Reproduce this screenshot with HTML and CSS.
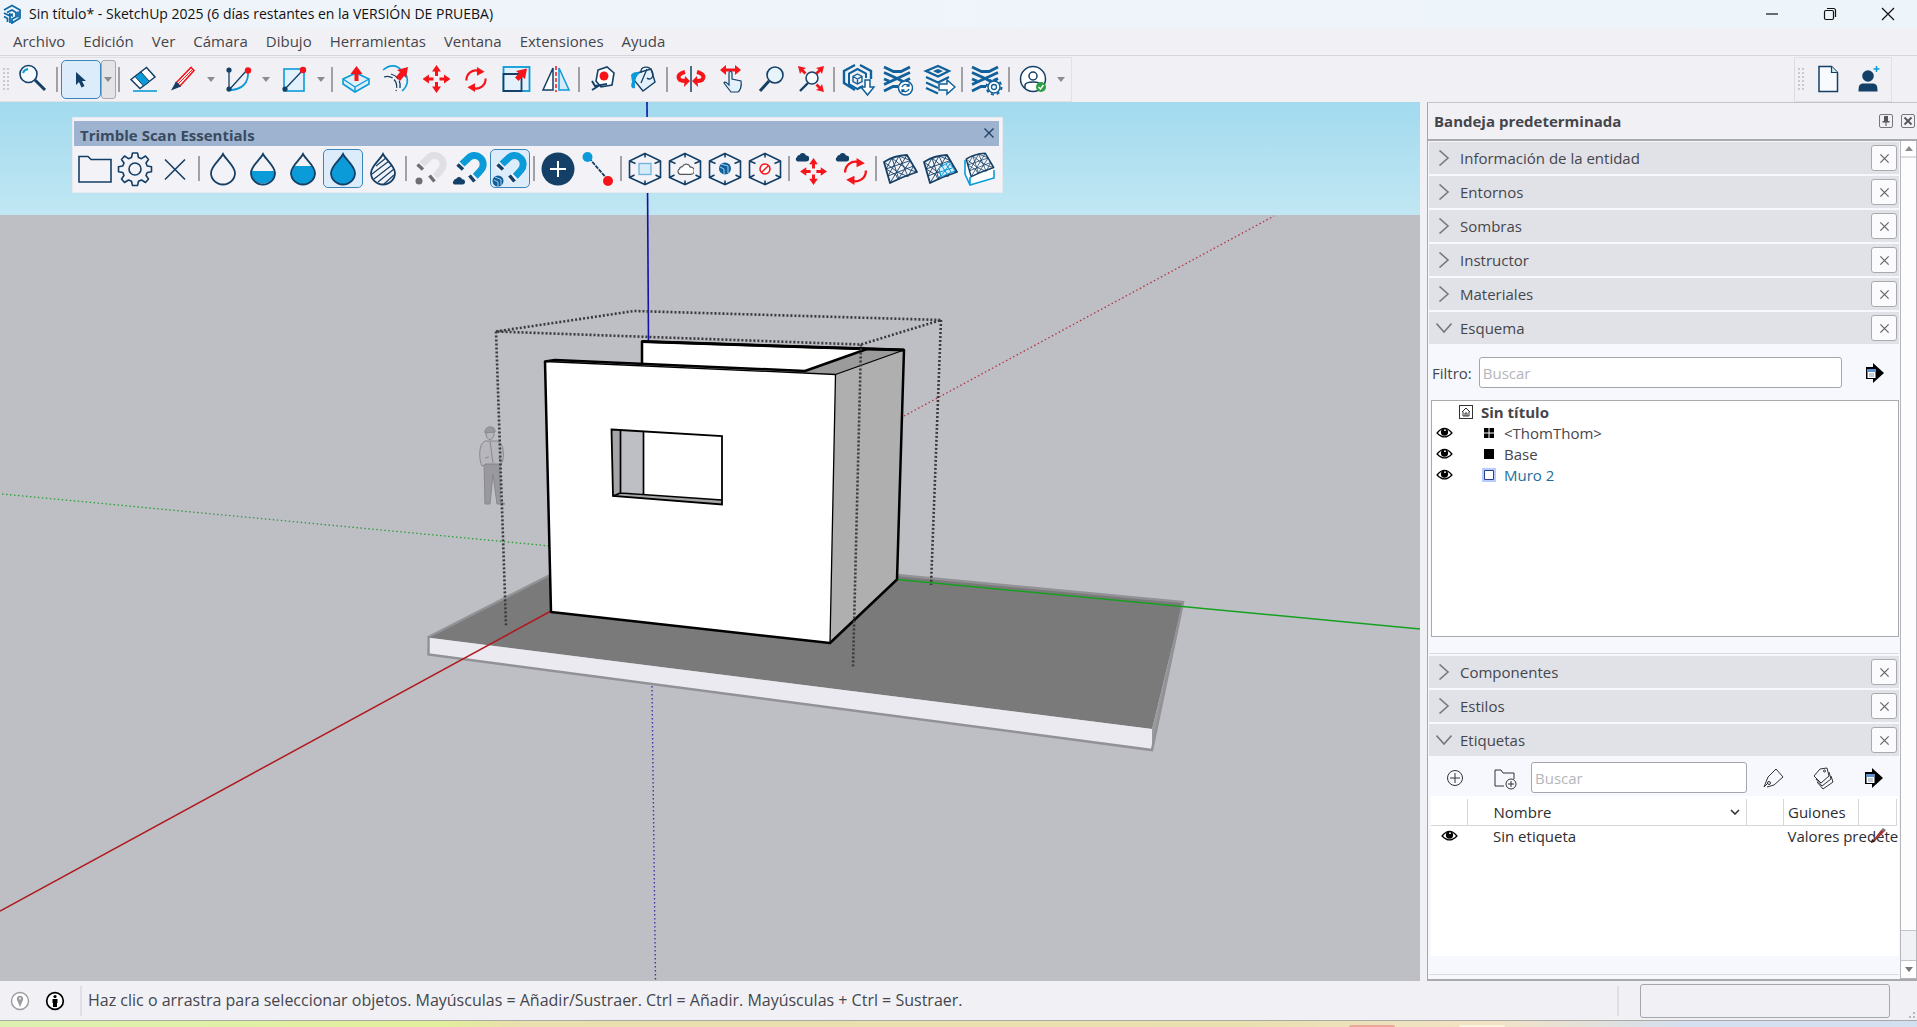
FILE: index.html
```html
<!DOCTYPE html>
<html lang="es">
<head>
    <meta charset="UTF-8">
    <meta name="viewport" content="width=device-width, initial-scale=1.0">
    <title>Sin título* - SketchUp 2025</title>
    <link rel="stylesheet" href="styles.css">
</head>
<body>
    <!-- shared shapes -->
    <svg class="defs" aria-hidden="true">
        <symbol id="i-x" viewBox="0 0 12 12"><path d="M1.5 1.5l9 9M10.5 1.5l-9 9" fill="none" stroke="currentColor" stroke-width="1.4"/></symbol>
        <symbol id="i-right" viewBox="0 0 16 16"><path d="M3.500 0.500l8.500 7.500-8.500 7.500" fill="none" stroke="currentColor" stroke-width="1.6"/></symbol>
        <symbol id="i-down" viewBox="0 0 16 16"><path d="M0.500 3.500l7.500 8.500 7.500-8.500" fill="none" stroke="currentColor" stroke-width="1.6"/></symbol>
        <symbol id="i-eye" viewBox="0 0 18 14"><path d="M1 7.500Q9-2.500 17 7.500Q9 16 1 7.500Z" fill="#fff" stroke="#000" stroke-width="1.500"/><circle cx="9" cy="6.500" r="3.900"/><circle cx="9.500" cy="4.500" r="1" fill="#fff"/></symbol>
        <symbol id="i-export" viewBox="0 0 18 20"><path d="M0 4h7V0l11 10L7 20v-4H0z"/><path d="M1.500 6h8v9h-8z" fill="#fff"/><path d="M1.500 6h8v3h-8z" fill="#5b93d6"/><path d="M3 11h5M3 13h5" stroke="#8a9bb0"/></symbol>
        <symbol id="i-drop" viewBox="0 0 36 36"><path d="M18 3C15 9 6 15 6 22a12 11.500 0 0 0 24 0C30 15 21 9 18 3z" stroke="#143f66" stroke-width="1.800"/></symbol>
        <symbol id="i-cube" viewBox="0 0 36 36"><path d="M18 2.500l15.500 7.500v16.500L18 33.500 2.500 26.500V10zM18 2.500v4M18 33.500v-4M2.500 10l6 2.500M33.500 10l-6 2.500M2.500 26.500l5-2.500M33.500 26.500l-5-2.500" fill="none" stroke="#143f66" stroke-width="1.600"/></symbol>
        <symbol id="i-cloud" viewBox="0 0 14 10"><path d="M2.500 9.500A2.500 2.500 0 0 1 2 5 2.500 2.500 0 0 1 4.500 3 3.500 3.500 0 0 1 11 3.500a3 3 0 0 1 .500 6z"/></symbol>
        <symbol id="i-move" viewBox="0 0 28 28"><path d="M14 0l4.500 6.500h-3V11h-3V6.500h-3zM14 28l4.500-6.500h-3V17h-3v4.500h-3zM0 14l6.500-4.500v3H11v3H6.500v3zM28 14l-6.500-4.500v3H17v3h4.500v3z" fill="#f5141a"/></symbol>
        <symbol id="i-rotate" viewBox="0 0 24 26"><path d="M2 14A10 10 0 0 1 15 4M22 12A10 10 0 0 1 9 22" fill="none" stroke="#f5141a" stroke-width="2.200"/><path d="M13 0l8 5-8 4zM11 26l-8-5 8-4z" fill="#f5141a"/></symbol>
        <symbol id="i-magnet" viewBox="0 0 36 36"><path d="M9 14L16 7.500A8.500 8.500 0 0 1 29 19L21 28" fill="none" stroke="currentColor" stroke-width="7"/></symbol>
        <symbol id="i-tips" viewBox="0 0 36 36"><path d="M5 13l6 6M17.500 24.500l6 6" fill="none" stroke="#f3f3f7" stroke-width="7"/><path d="M5.500 13.500l5.500 5M17.500 24.500l5 6" fill="none" stroke="currentColor" stroke-width="3.500"/></symbol>
        <symbol id="i-mesh" viewBox="0 0 36 36"><path d="M10 7l7 21.500M17 5l9 20.500M4 18l24.500-8.500M6 25l25.500-10M2 11l7.500 5.500 6.500 5 10 4M10 7l8 6.500 10 5.500 7 2M17 5l11.500 4.500M4 18l10 6 2 4.500M10 7L4 18M17 5L6 25M25 4L8 32M28.500 9.500L16 28.500M31.500 15L26 25.500" fill="none" stroke="currentColor" stroke-width=".9"/><path d="M2 11Q12 4.500 25 4L35 21Q20 26 8 32z" fill="none" stroke="currentColor" stroke-width="1.800" stroke-linejoin="round"/></symbol>
        <symbol id="i-layers" viewBox="0 0 36 36"><path d="M4 6l9.500 4.500h7.500L30 6M4 11.500l11 5 9 4.500M30 11.500L17 17.500 4 23.500M4 18l5 2M30 17.500l-5 2.500M4 30l9-4.500h5" fill="none" stroke="#10609b" stroke-width="2.800"/></symbol>
    </svg>

    <header class="titlebar">
        <svg class="logo" viewBox="0 0 20 20"><path d="M2 6l8-4.500L18 6v8l-8 5V15l4-2V8.500L10 6 5 8.500M2 9l6 3v7M2 12.500l3.500 2V18M10 9.500v2l-3-2M16 7.500v6" fill="none" stroke="#0e6aa8" stroke-width="1.800"/></svg>
        <h1>Sin título* - SketchUp 2025 (6 días restantes en la VERSIÓN DE PRUEBA)</h1>
        <div class="window-controls">
            <button aria-label="Minimizar"><svg viewBox="0 0 14 14"><path d="M1 7h12"/></svg></button>
            <button aria-label="Restaurar"><svg viewBox="0 0 14 14"><rect x="1.500" y="3.500" width="9" height="9" rx="1.500"/><path d="M4 1.500h6.500a2 2 0 0 1 2 2V10"/></svg></button>
            <button aria-label="Cerrar"><svg viewBox="0 0 14 14"><path d="M1 1l12 12M13 1L1 13"/></svg></button>
        </div>
    </header>

    <nav class="menubar">
        <button>Archivo</button>
        <button>Edición</button>
        <button>Ver</button>
        <button>Cámara</button>
        <button>Dibujo</button>
        <button>Herramientas</button>
        <button>Ventana</button>
        <button>Extensiones</button>
        <button>Ayuda</button>
    </nav>

    <div class="toolbars">
        <div class="toolbar main-tools">
            <span class="grip"></span>
            <button class="tool" aria-label="Buscar"><svg viewBox="0 0 36 36"><circle cx="13.500" cy="13" r="8.500" fill="#f4fafe" stroke="#143f66" stroke-width="1.600"/><path d="M8 12a6 6 0 0 1 5-4" fill="none" stroke="#0a9bd8" stroke-width="2"/><path d="M20 19l10 10" stroke="#143f66" stroke-width="3"/></svg></button>
            <span class="sep"></span>
            <button class="tool selected" aria-label="Seleccionar"><svg viewBox="0 0 36 36"><path d="M13 11v13l3-3 2.500 5.500 3-1.500-2.500-5h4z" fill="#143f66"/></svg></button>
            <button class="drop boxed" aria-label="Más"></button>
            <span class="sep"></span>
            <button class="tool" aria-label="Borrador"><svg viewBox="0 0 36 36"><path d="M21.500 6.500l8.500 9.500L15 27.500 6 18.500z" fill="#fff" stroke="#143f66" stroke-width="1.500"/><path d="M16 11l8.500 9.500-6 4.500L10 15.500z" fill="#0a9bd8" stroke="#143f66"/><path d="M8 30h24" stroke="#0a9bd8" stroke-width="1.600"/></svg></button>
            <button class="tool" aria-label="Línea"><svg viewBox="0 0 36 36"><path d="M11 22L26 6.500l3 3L15 25z" fill="#fff" stroke="#f5141a" stroke-width="1.600"/><path d="M13 23L28 8" stroke="#f5141a"/><path d="M11 20.500l5 5L6 29.500z" fill="#143f66"/></svg></button>
            <button class="drop" aria-label="Más"></button>
            <button class="tool" aria-label="Arco"><svg viewBox="0 0 36 36"><path d="M9 10v19L27 9" fill="none" stroke="#143f66" stroke-width="1.300"/><path d="M9 29C22 29 29 22 28 10" fill="none" stroke="#0a9bd8" stroke-width="1.800"/><circle cx="9" cy="9" r="2.600" fill="#143f66"/><circle cx="9" cy="28" r="2.600" fill="#143f66"/><circle cx="28" cy="9.500" r="3.200" fill="#f5141a"/></svg></button>
            <button class="drop" aria-label="Más"></button>
            <button class="tool" aria-label="Rectángulo"><svg viewBox="0 0 36 36"><rect x="9" y="8" width="20" height="22" fill="#e2f1fb" stroke="#0a9bd8" stroke-width="1.600"/><path d="M10 28L28 9" stroke="#143f66" stroke-width="1.300"/><circle cx="10" cy="28" r="2.600" fill="#143f66"/><circle cx="28" cy="9" r="3.200" fill="#f5141a"/></svg></button>
            <button class="drop" aria-label="Más"></button>
            <span class="sep"></span>
            <button class="tool" aria-label="Empujar/tirar"><svg viewBox="0 0 36 36"><path d="M5 18l13-6 13 6v5L17 31 5 23z" fill="#dff0fb" stroke="#0a9bd8" stroke-width="1.600"/><path d="M5 18l12 8 14-8M17 26v5" fill="none" stroke="#0a9bd8" stroke-width="1.400"/><path d="M18.500 5l6 8h-4v7h-4v-7h-4z" fill="#f5141a"/></svg></button>
            <button class="tool" aria-label="Sígueme"><svg viewBox="0 0 36 36"><path d="M5 9C12 3 19 4 23 9M27 12c4 6 3 13-3 18" fill="none" stroke="#0a9bd8" stroke-width="1.600"/><path d="M6 16c8-3 15 5 12 14M13 13c7 2 10 8 9 14" fill="none" stroke="#143f66" stroke-width="1.300" stroke-dasharray="9 2"/><path d="M30 6L19 9l3 2-4 5 4 4 4-5 2 2z" fill="#f5141a"/></svg></button>
            <button class="tool" aria-label="Mover"><svg viewBox="0 0 36 36"><use href="#i-move" x="4.500" y="4" width="28" height="28"/></svg></button>
            <button class="tool" aria-label="Rotar"><svg viewBox="0 0 36 36"><use href="#i-rotate" x="6.500" y="6" width="23" height="25"/></svg></button>
            <button class="tool" aria-label="Escala"><svg viewBox="0 0 36 36"><rect x="5.500" y="6" width="26" height="24" fill="#e2f1fb" stroke="#0a9bd8" stroke-width="1.800"/><path d="M5.500 13v17h18V13z" fill="#e2f1fb" stroke="#143f66" stroke-width="1.800"/><path d="M29 7.500L18 10l3 2.500-4 4 3.500 3.500 4-4L27 18z" fill="#f5141a"/></svg></button>
            <button class="tool" aria-label="Voltear"><svg viewBox="0 0 36 36"><path d="M15 7v22H5z" fill="#fff" stroke="#143f66" stroke-width="1.500"/><path d="M21 7v22h10z" fill="#d6ebf9" stroke="#0a9bd8" stroke-width="1.500"/><path d="M18 5v26" stroke="#f5141a" stroke-width="1.500" stroke-dasharray="4 2"/></svg></button>
            <span class="sep"></span>
            <button class="tool" aria-label="Medir"><svg viewBox="0 0 36 36"><path d="M13 9l9-3 7 6-2 12-11 2-5-6z" fill="#fff" stroke="#143f66" stroke-width="1.600"/><circle cx="19" cy="15" r="4.500" fill="#f5141a"/><path d="M7 20l3 5 12-2M7 29l8-5" fill="none" stroke="#143f66" stroke-width="2"/></svg></button>
            <button class="tool" aria-label="Pintar"><svg viewBox="0 0 36 36"><path d="M12 12l14-4 4 13-12 9-9-11z" fill="#e2f1fb" stroke="#143f66" stroke-width="1.400"/><path d="M16 12c-1-7 8-8 11-2s-2 10-5 7M22 8l-6 14" fill="none" stroke="#143f66" stroke-width="1.300"/><path d="M6 14c3-4 8-3 9-2-5 4-5 8-5 15-3 1-5-1-3-6z" fill="#0a9bd8"/></svg></button>
            <span class="sep"></span>
            <button class="tool" aria-label="Orbitar"><svg viewBox="0 0 36 36"><path d="M12 11c-8 2-7 6-5 8 2 1 4 1 7 1M24 11c8 2 7 6 5 8-2 1-3 1-5 1" fill="none" stroke="#f5141a" stroke-width="4"/><path d="M12 15l5 5-6 6zM24 15l-5 5 6 6z" fill="#f5141a"/><path d="M18 5v26" stroke="#143f66" stroke-width="1.500"/></svg></button>
            <button class="tool" aria-label="Desplazar"><svg viewBox="0 0 36 36"><path d="M7 9l6-5v3.500h9V4l6 5-6 5v-3.500h-9V14z" fill="#f5141a"/><path d="M16 24V12c0-2 3-2 3 0v6l9 2c1 5-1 10-3 11h-7l-7-9c1-2 3 0 5 2z" fill="#e2f1fb" stroke="#143f66" stroke-width="1.200"/></svg></button>
            <button class="tool" aria-label="Zoom"><svg viewBox="0 0 36 36"><circle cx="22" cy="14" r="8" fill="#e8f4fc" stroke="#143f66" stroke-width="1.600"/><path d="M16 20L7 30" stroke="#143f66" stroke-width="3"/></svg></button>
            <button class="tool" aria-label="Ver todo"><svg viewBox="0 0 36 36"><circle cx="19" cy="17" r="6" fill="#f4fafe" stroke="#143f66" stroke-width="1.500"/><path d="M15 22l-8 8" stroke="#143f66" stroke-width="2.400"/><path d="M5 5l8 2-2.500 1.500 3 3-2 2-3-3L7 13zM31 5l-8 2 2.500 1.500-3 3 2 2 3-3L29 13zM31 31l-8-2 2.500-1.500-3-3 2-2 3 3L29 23z" fill="#f5141a"/></svg></button>
            <span class="sep"></span>
            <button class="tool" aria-label="3D Warehouse"><svg viewBox="0 0 36 36"><path d="M15 4L4 10v12l11 7M20 4l11 6v8" fill="none" stroke="#10609b" stroke-width="2.400"/><path d="M23 25l-5.500 3L9 23V12.500L17.500 8 26 12.500V17" fill="none" stroke="#10609b" stroke-width="2"/><path d="M17.500 13l4.500 2.500v5L17.500 23 13 20.500v-5zM13 15.500l4.500 2.500 4.500-2.500M17.500 18v5" fill="none" stroke="#10609b" stroke-width="1.400"/><path d="M25 19h5v7h4l-6.500 8L21 26h4z" fill="#fff" stroke="#10609b" stroke-width="1.500"/></svg></button>
            <button class="tool" aria-label="Extension Warehouse"><svg viewBox="0 0 36 36"><use href="#i-layers"/><circle cx="25.500" cy="27" r="7" fill="#fff" stroke="#10609b" stroke-width="1.500"/><path d="M22 26a4 4 0 0 1 7-1M29 28a4 4 0 0 1-7 1M29 22.500V25h-2.500M22 31.500V29h2.500" fill="none" stroke="#10609b" stroke-width="1.400"/></svg></button>
            <button class="tool" aria-label="LayOut"><svg viewBox="0 0 36 36"><path d="M6 10l12-5 11 5-11 5.500zM6 16l12 5.500 11-5.500M6 21.500l12 5.500M6 27l12 5.500" fill="none" stroke="#10609b" stroke-width="2.200"/><path d="M13 10l5-2 5 2-5 2.500z" fill="#10609b"/><path d="M19 23h8v-4l8 7-8 7v-4h-8z" fill="#fff" stroke="#10609b" stroke-width="1.500"/></svg></button>
            <span class="sep"></span>
            <button class="tool" aria-label="Administrador de extensiones"><svg viewBox="0 0 36 36"><use href="#i-layers"/><circle cx="26" cy="26" r="6" fill="#fff" stroke="#10609b" stroke-width="1.500"/><circle cx="26" cy="26" r="7.500" fill="none" stroke="#10609b" stroke-width="2" stroke-dasharray="3 2.900"/><circle cx="26" cy="26" r="2.500" fill="none" stroke="#10609b" stroke-width="1.300"/></svg></button>
            <span class="sep"></span>
            <button class="tool" aria-label="Cuenta"><svg viewBox="0 0 36 36"><circle cx="18" cy="18" r="12.500" fill="#fff" stroke="#143f66" stroke-width="1.500"/><circle cx="18" cy="15" r="4" fill="none" stroke="#143f66" stroke-width="1.500"/><path d="M10 27v-3c1-4 15-4 16 0v3" fill="none" stroke="#143f66" stroke-width="1.500"/><circle cx="26" cy="26" r="5" fill="#2f9e44"/><path d="M23.500 26l2 2 3-4" fill="none" stroke="#fff" stroke-width="1.400"/></svg></button>
            <button class="drop" aria-label="Más"></button>
        </div>
        <div class="toolbar side-tools">
            <span class="grip"></span>
            <button class="tool" aria-label="Nuevo"><svg viewBox="0 0 36 36"><path d="M9 5.500h12.500l6 6v19H9z" fill="#f7fbff" stroke="#143f66" stroke-width="1.500"/><path d="M21.500 5.500v6h6" fill="#cfe6f6" stroke="#143f66" stroke-width="1.200"/></svg></button>
            <button class="tool" aria-label="Añadir usuario"><svg viewBox="0 0 36 36"><circle cx="18" cy="15" r="5.800" fill="#143f66"/><path d="M8.500 30.500c0-6 1-8 5-8h9c4 0 5 2 5 8z" fill="#143f66"/><path d="M26.500 5v6M23.500 8h6" stroke="#0a9bd8" stroke-width="1.500"/></svg></button>
        </div>
    </div>

    <main class="workspace">
        <div class="viewport">
            <svg class="scene" viewBox="0 102 1420 879" preserveAspectRatio="xMidYMid slice" role="img" aria-label="Modelo">
                <defs>
                    <linearGradient id="sky" x1="0" y1="0" x2="0" y2="1"><stop offset="0" stop-color="#a2daee"/><stop offset="1" stop-color="#c1e7f3"/></linearGradient>
                </defs>
                <rect x="-500" y="102" width="2500" height="114" fill="url(#sky)"/>
                <rect x="-500" y="215" width="2500" height="1000" fill="#bebfc5"/>
                <!-- axes behind the model -->
                <path d="M647 102L648.500 341" stroke="#1313a8" stroke-width="1.600"/>
                <path d="M652 686L655.500 981" stroke="#3a34a8" stroke-width="1.400" stroke-dasharray="1.500 2.500"/>
                <path d="M904 416L1274 216" stroke="#b23340" stroke-width="1.300" stroke-dasharray="1.500 2.500"/>
                <path d="M2 494L550 546" stroke="#2c9c3a" stroke-width="1.300" stroke-dasharray="1.500 2.500"/>
                <!-- scale figure -->
                <g fill="#b6b6bc" stroke="#88888e" stroke-width="1">
                    <path d="M484 464l1 40h5l3-30 4 30h8l-5-3v-37z" fill="#98989e"/>
                    <path d="M485 441c-7 3-6 20-3 25l3-1v-1h16l2-4c1-10 0-17-6-19z"/>
                    <path d="M490 441l3 22M485 458l4-1M498 458l3 1" fill="none"/>
                    <ellipse cx="490" cy="434" rx="4" ry="5.500"/>
                    <path d="M485 433c-1-8 11-8 10-1z" fill="#98989e"/>
                </g>
                <!-- slab -->
                <path d="M427 637.500L551 574l346 1 286 27-31 127z" fill="#7a7a7b"/>
                <path d="M427 637.500L1152 729v21L428 654z" fill="#ebeaf1"/>
                <path d="M1183 602L1152 729v21z" fill="#99999e"/>
                <path d="M427.500 637.500L551 574.500M897 575l286 27-31 148L428.500 654.500v-17" fill="none" stroke="#919196" stroke-width="2.500"/>
                <path d="M897 579.500L1420 629" stroke="#16a01f" stroke-width="1.600"/>
                <path d="M551 611L0 911" stroke="#b01a1f" stroke-width="1.500"/>
                <!-- walls -->
                <path d="M642 341.500L867 350 805 371.500 642 364z" fill="#fff"/>
                <path d="M545 361.500l10-1.500 250 11L867 349l37 1-68.500 24.500z" fill="#9b9b9c"/>
                <path d="M835.500 374.500L904 350l-7 229.500-67 63.500z" fill="#afafb0"/>
                <path d="M545 361.500l290.500 13L830 643 551 612z" fill="#fff"/>
                <path d="M835.500 374.500L830 643M835.500 374.500L904 350M835.500 374.500l-290.500-13" fill="none" stroke="#000" stroke-width="1.300"/>
                <path d="M642 364v-22.500L904 350l-7 229.500-67 63.500-279-31-6-250.500 10-1.500 250 11L867 349" fill="none" stroke="#000" stroke-width="2.500" stroke-linejoin="round"/>
                <path d="M642 341.500L904 350" stroke="#000" stroke-width="3"/>
                <!-- window opening -->
                <path d="M611.500 429.500L722 436v68.500L613 496z" fill="#a5a5a7"/>
                <path d="M620.500 430l101.500 6v64l-101.500-7z" fill="#fff"/>
                <path d="M620.500 430l23 1.500v62.500l-23-1.500z" fill="#bebfc5"/>
                <path d="M620.500 430v63M643.500 431.500v62.500M620.500 493l101.500 7M620.500 493l-7.500 3" fill="none" stroke="#000" stroke-width="1.700"/>
                <path d="M611.500 429.500L722 436v68.500L613 496z" fill="none" stroke="#000" stroke-width="1.800"/>
                <!-- bounding box -->
                <path d="M496 331.500L634 311l307 9-80 24.500zM496 331.500L506 626M861 344.500L853 667M941 320L931 585" fill="none" stroke="#3b3b3e" stroke-width="2.600" stroke-dasharray="2 2"/>
            </svg>

            <div class="floatbar">
                <div class="floatbar-title">
                    <h2>Trimble Scan Essentials</h2>
                    <button aria-label="Cerrar"><svg viewBox="0 0 12 12"><use href="#i-x"/></svg></button>
                </div>
                <div class="floatbar-tools">
                    <button class="tool" aria-label="Abrir"><svg viewBox="0 0 36 36"><path d="M2 31V5.500h9l3 3h20V31z" fill="none" stroke="#143f66" stroke-width="1.600"/></svg></button>
                    <button class="tool" aria-label="Configuración"><svg viewBox="0 0 36 36"><path d="M15.500 2h5l1 4.500 3 1.200L28.500 5l3 3.500-2.500 3.500 1.200 3 4.300.800v5l-4.300.700-1.200 3 2.500 3.500-3 3.500-4-2.500-3 1.200-1 4.300h-5l-1-4.300-3-1.200-4 2.500-3-3.500L7 24.500l-1.200-3L1.500 20.800v-5l4.300-.800L7 12 4.500 8.500l3-3.500 4 2.700 3-1.200z" fill="none" stroke="#143f66" stroke-width="1.600" stroke-linejoin="round"/><circle cx="18" cy="18" r="6" fill="none" stroke="#143f66" stroke-width="1.600"/></svg></button>
                    <button class="tool" aria-label="Quitar"><svg viewBox="0 0 36 36"><path d="M8 8.500l20 20M28 8.500l-20 20" stroke="#143f66" stroke-width="1.600"/></svg></button>
                    <span class="sep"></span>
                    <button class="tool" aria-label="Densidad 0"><svg viewBox="0 0 36 36"><use href="#i-drop" fill="none"/></svg></button>
                    <button class="tool" aria-label="Densidad 1"><svg viewBox="0 0 36 36"><path d="M6.500 20h23c2 16-25 17-23 0z" fill="#0a9bd8"/><use href="#i-drop" fill="none"/></svg></button>
                    <button class="tool" aria-label="Densidad 2"><svg viewBox="0 0 36 36"><path d="M9.500 15h17c7 10 1 18-8.500 18S2.500 25 9.500 15z" fill="#0a9bd8"/><use href="#i-drop" fill="none"/></svg></button>
                    <button class="tool selected" aria-label="Densidad 3"><svg viewBox="0 0 36 36"><use href="#i-drop" fill="#0a9bd8"/></svg></button>
                    <button class="tool" aria-label="Densidad auto"><svg viewBox="0 0 36 36"><use href="#i-drop" fill="none"/><path d="M11 15l10-8M7 23L24 10M9 28L27 14M13 31l16-13M19 33l10-9" stroke="#143f66" stroke-width="1.200"/></svg></button>
                    <span class="sep"></span>
                    <button class="tool" aria-label="Imán apagado"><svg viewBox="0 0 36 36"><use href="#i-magnet" color="#dfdfe4"/><use href="#i-tips" color="#6f6f73"/><circle cx="7" cy="30" r="3.500" fill="#6f6f73"/></svg></button>
                    <button class="tool" aria-label="Imán a nube"><svg viewBox="0 0 36 36"><use href="#i-magnet" color="#0a9bd8"/><use href="#i-tips" color="#143f66"/><use href="#i-cloud" x="0" y="25" width="13" height="9" fill="#143f66"/></svg></button>
                    <button class="tool selected" aria-label="Imán a modelo"><svg viewBox="0 0 36 36"><use href="#i-magnet" color="#0a9bd8"/><use href="#i-tips" color="#143f66"/><circle cx="6" cy="30" r="5.500" fill="#10609b"/><path d="M2 29l4 2v4M3 26l6 2.500V34" fill="none" stroke="#cfe6f6" stroke-width=".8"/></svg></button>
                    <span class="sep"></span>
                    <button class="tool" aria-label="Punto"><svg viewBox="0 0 36 36"><circle cx="18" cy="18" r="16.500" fill="#143f66"/><path d="M18 10v16M10 18h16" stroke="#fff" stroke-width="2"/></svg></button>
                    <button class="tool" aria-label="Línea entre puntos"><svg viewBox="0 0 36 36"><path d="M9 7l19 22" stroke="#143f66" stroke-width="1.800" stroke-dasharray="4 1"/><circle cx="7.500" cy="6" r="5" fill="#0a9bd8"/><circle cx="28" cy="30" r="5" fill="#f5141a"/></svg></button>
                    <span class="sep"></span>
                    <button class="tool" aria-label="Caja"><svg viewBox="0 0 36 36"><use href="#i-cube"/><rect x="12" y="12.500" width="12" height="11" fill="#d6ebf9" stroke="#6fb4e0" stroke-width="1.300"/></svg></button>
                    <button class="tool" aria-label="Caja nube"><svg viewBox="0 0 36 36"><use href="#i-cube"/><use href="#i-cloud" x="10" y="12" width="17" height="12" fill="#fff" stroke="#55565c"/></svg></button>
                    <button class="tool" aria-label="Caja modelo"><svg viewBox="0 0 36 36"><use href="#i-cube"/><circle cx="18" cy="17.500" r="6" fill="#10609b"/><path d="M13 16l4 2v5M14 13l7 2v7" fill="none" stroke="#9fd0ee" stroke-width="1"/></svg></button>
                    <button class="tool" aria-label="Sin caja"><svg viewBox="0 0 36 36"><use href="#i-cube"/><circle cx="18" cy="18" r="5" fill="#fff" stroke="#f5141a" stroke-width="1.500"/><path d="M21.500 14.500l-7 7" stroke="#f5141a" stroke-width="1.500"/></svg></button>
                    <span class="sep"></span>
                    <button class="tool" aria-label="Mover nube"><svg viewBox="0 0 36 36"><use href="#i-cloud" x="0" y="1" width="14" height="10" fill="#143f66"/><use href="#i-move" x="5" y="7" width="27" height="27"/></svg></button>
                    <button class="tool" aria-label="Rotar nube"><svg viewBox="0 0 36 36"><use href="#i-cloud" x="0" y="1" width="14" height="10" fill="#143f66"/><use href="#i-rotate" x="8" y="7" width="25" height="27"/></svg></button>
                    <span class="sep"></span>
                    <button class="tool" aria-label="Malla"><svg viewBox="0 0 36 36"><use href="#i-mesh" color="#143f66"/></svg></button>
                    <button class="tool" aria-label="Malla parcial"><svg viewBox="0 0 36 36"><use href="#i-mesh" color="#143f66"/><path d="M17 17l10-6 6 9-8 3-6 3z" fill="#d6ebf9" stroke="#0a9bd8"/><path d="M20 15l5 8M18 21l12-4M19 25l9-12M24 13l5 8" stroke="#0a9bd8" stroke-width="1"/></svg></button>
                    <button class="tool" aria-label="Malla sólida"><svg viewBox="0 0 36 36"><path d="M3 9v14l5 11 24-7v-8M8 34v-8" fill="#fff" stroke="#0a9bd8" stroke-width="1.600"/><use href="#i-mesh" x="2" y="-1" width="31" height="30" color="#143f66"/></svg></button>
                </div>
            </div>
        </div>

        <aside class="tray">
            <div class="tray-title">
                <h2>Bandeja predeterminada</h2>
                <button aria-label="Fijar"><svg viewBox="0 0 12 12"><path d="M4 1h4v5h1.500v1.500h-7V6H4zM5.500 7.500h1V11h-1z" fill="#55565c"/></svg></button>
                <button aria-label="Cerrar bandeja"><svg viewBox="0 0 12 12"><path d="M2.500 2.500l7 7M9.500 2.500l-7 7" stroke="#55565c" stroke-width="1.800"/></svg></button>
            </div>
            <div class="tray-scroll">
                <div class="tray-panels">
                    <div class="panel-head"><button class="toggle"><svg viewBox="0 0 16 16"><use href="#i-right"/></svg>Información de la entidad</button><button class="close" aria-label="Cerrar"><svg viewBox="0 0 12 12"><use href="#i-x"/></svg></button></div>
                    <div class="panel-head"><button class="toggle"><svg viewBox="0 0 16 16"><use href="#i-right"/></svg>Entornos</button><button class="close" aria-label="Cerrar"><svg viewBox="0 0 12 12"><use href="#i-x"/></svg></button></div>
                    <div class="panel-head"><button class="toggle"><svg viewBox="0 0 16 16"><use href="#i-right"/></svg>Sombras</button><button class="close" aria-label="Cerrar"><svg viewBox="0 0 12 12"><use href="#i-x"/></svg></button></div>
                    <div class="panel-head"><button class="toggle"><svg viewBox="0 0 16 16"><use href="#i-right"/></svg>Instructor</button><button class="close" aria-label="Cerrar"><svg viewBox="0 0 12 12"><use href="#i-x"/></svg></button></div>
                    <div class="panel-head"><button class="toggle"><svg viewBox="0 0 16 16"><use href="#i-right"/></svg>Materiales</button><button class="close" aria-label="Cerrar"><svg viewBox="0 0 12 12"><use href="#i-x"/></svg></button></div>
                    <div class="panel-head"><button class="toggle"><svg viewBox="0 0 16 16"><use href="#i-down"/></svg>Esquema</button><button class="close" aria-label="Cerrar"><svg viewBox="0 0 12 12"><use href="#i-x"/></svg></button></div>

                    <div class="outliner">
                        <div class="filter">
                            <label for="filtro">Filtro:</label>
                            <input type="text" id="filtro" placeholder="Buscar">
                            <button class="export" aria-label="Detalles"><svg viewBox="0 0 18 20"><use href="#i-export"/></svg></button>
                        </div>
                        <ul class="tree">
                            <li class="root"><svg class="home" viewBox="0 0 14 14"><rect x="0.500" y="0.500" width="13" height="13" fill="#fff" stroke="#333"/><path d="M3 7l4-4 4 4M4 6.500V11h6V6.500M6 11V8h2v3" fill="none" stroke="#333"/></svg>Sin título</li>
                            <li><svg class="eye" viewBox="0 0 18 14"><use href="#i-eye"/></svg><svg class="kind" viewBox="0 0 14 14"><path d="M2 2h10v10H2z"/><path d="M7 2v10M2 7h10" stroke="#fff"/></svg>&lt;ThomThom&gt;</li>
                            <li><svg class="eye" viewBox="0 0 18 14"><use href="#i-eye"/></svg><svg class="kind" viewBox="0 0 14 14"><path d="M2 2h10v10H2z"/></svg>Base</li>
                            <li class="active"><svg class="eye" viewBox="0 0 18 14"><use href="#i-eye"/></svg><svg class="kind" viewBox="0 0 14 14"><path d="M0 0h14v14H0z" fill="#b9ccff"/><path d="M2.500 2.500h9v9h-9z" fill="#fff" stroke="#27408f"/></svg>Muro 2</li>
                        </ul>
                    </div>

                    <div class="panel-head"><button class="toggle"><svg viewBox="0 0 16 16"><use href="#i-right"/></svg>Componentes</button><button class="close" aria-label="Cerrar"><svg viewBox="0 0 12 12"><use href="#i-x"/></svg></button></div>
                    <div class="panel-head"><button class="toggle"><svg viewBox="0 0 16 16"><use href="#i-right"/></svg>Estilos</button><button class="close" aria-label="Cerrar"><svg viewBox="0 0 12 12"><use href="#i-x"/></svg></button></div>
                    <div class="panel-head"><button class="toggle"><svg viewBox="0 0 16 16"><use href="#i-down"/></svg>Etiquetas</button><button class="close" aria-label="Cerrar"><svg viewBox="0 0 12 12"><use href="#i-x"/></svg></button></div>

                    <div class="tags">
                        <div class="tags-tools">
                            <button aria-label="Añadir etiqueta"><svg viewBox="0 0 24 24"><circle cx="12" cy="12" r="7.500"/><path d="M12 7v10M7 12h10"/></svg></button>
                            <button aria-label="Añadir carpeta"><svg viewBox="0 0 24 24"><path d="M11 20H2V4h6l2 3h11v6"/><circle cx="18" cy="18" r="5"/><path d="M18 15v6M15 18h6"/></svg></button>
                            <input type="text" placeholder="Buscar" aria-label="Buscar etiquetas">
                            <button aria-label="Etiquetar"><svg viewBox="0 0 24 24"><path d="M3 21l4-10 8-8 7 8-9 8-7 2M3 21l4-4"/><circle cx="8" cy="17" r="1.500"/></svg></button>
                            <button aria-label="Etiquetas"><svg viewBox="0 0 24 24"><path d="M3 10l6-7 7-1 2 8-8 7zM18 6l2 7-9 7-6-7M20 10l2 6-10 7-6-7"/><circle cx="13.500" cy="5" r="1"/></svg></button>
                            <button class="export" aria-label="Detalles"><svg viewBox="0 0 18 20"><use href="#i-export"/></svg></button>
                        </div>
                        <div class="tags-list">
                            <table>
                                <colgroup><col class="c-eye"><col><col class="c-color"><col class="c-dash"><col class="c-pen"></colgroup>
                                <thead>
                                    <tr>
                                        <th></th>
                                        <th class="name"><div>Nombre<svg viewBox="0 0 10 6"><path d="M1 1l4 4 4-4" fill="none" stroke="#333" stroke-width="1.600"/></svg></div></th>
                                        <th></th>
                                        <th>Guiones</th>
                                        <th></th>
                                    </tr>
                                </thead>
                                <tbody>
                                    <tr>
                                        <td><svg class="eye" viewBox="0 0 18 14"><use href="#i-eye"/></svg></td>
                                        <td class="name">Sin etiqueta</td>
                                        <td></td>
                                        <td>Valores predete</td>
                                        <td class="pen"><svg viewBox="0 0 18 16"><path d="M2 15L12 2l4 1L5 14z" fill="#a3332c"/><path d="M2 15l1-4 3 2z" fill="#222"/><path d="M12 2l2-2 3 2-2 2z" fill="#777"/></svg></td>
                                    </tr>
                                </tbody>
                            </table>
                        </div>
                    </div>
                </div>
                <div class="scrollbar">
                    <button class="up" aria-label="Subir"></button>
                    <span class="thumb"></span>
                    <button class="down" aria-label="Bajar"></button>
                </div>
            </div>
        </aside>
    </main>

    <footer class="statusbar">
        <button aria-label="Geolocalización"><svg viewBox="0 0 20 20"><circle cx="10" cy="10" r="8.500" fill="#fff" stroke="#9a9aa0" stroke-width="1.400"/><path d="M10 16L7 9a3.200 3.200 0 1 1 6 0z" fill="#9a9aa0"/><circle cx="10" cy="7.500" r="1" fill="#fff"/></svg></button>
        <button aria-label="Créditos"><svg viewBox="0 0 20 20"><circle cx="10" cy="10" r="8.300" fill="#fff" stroke="#000" stroke-width="1.700"/><circle cx="10" cy="5.500" r="1.600"/><path d="M7.500 8h5v4H12v4H8v-4h-.500z"/></svg></button>
        <p>Haz clic o arrastra para seleccionar objetos. Mayúsculas = Añadir/Sustraer. Ctrl = Añadir. Mayúsculas + Ctrl = Sustraer.</p>
        <input type="text" class="measure" aria-label="Medidas">
        <span class="resize"></span>
    </footer>
    <div class="desktop"><span></span><span></span></div>
</body>
</html>
```
FILE: styles.css
```css
* {
    box-sizing: border-box;
}
body {
    margin: 0;
    height: 100vh;
    display: flex;
    flex-direction: column;
    overflow: hidden;
    background: #f1f1f5;
    color: #45464c;
    font: 15px/20px "Open Sans", "Noto Sans", sans-serif;
}
h1, h2, p, ul {
    margin: 0;
    padding: 0;
}
button {
    padding: 0;
    border: 0;
    background: none;
    font: inherit;
    color: inherit;
}
input {
    font: inherit;
    border: 1px solid #a5a6ab;
    border-radius: 3px;
    background: #fff;
    min-width: 0;
}
input::placeholder {
    color: #b4b5ba;
}
svg {
    display: block;
}
.defs {
    position: absolute;
    width: 0;
    height: 0;
}

/* title and menus */
.titlebar {
    display: flex;
    align-items: center;
    height: 28px;
    padding-left: 2px;
    background: linear-gradient(90deg, #eff4fa, #eef5fa);
}
.logo {
    width: 20px;
    height: 20px;
    margin-right: 7px;
}
.titlebar h1 {
    flex: 1;
    font-size: 14px;
    font-weight: 400;
    color: #111;
}
.window-controls {
    display: flex;
}
.window-controls button {
    width: 58px;
    height: 28px;
}
.window-controls svg {
    width: 14px;
    height: 14px;
    margin: 0 auto;
    fill: none;
    stroke: #111;
    stroke-width: 1.2;
}
.menubar {
    display: flex;
    align-items: center;
    gap: 18px;
    height: 28px;
    padding: 0 0 2px 13px;
    border-bottom: 1px solid #d4d5d9;
}

/* toolbars */
.toolbars {
    display: flex;
    justify-content: space-between;
    height: 46px;
    padding: 1px 25px 0 0;
}
.toolbar {
    display: flex;
    align-items: center;
    border: 1px solid #e0e0e5;
    border-left: 0;
}
.main-tools {
    width: 1072px;
    padding: 0 3px 1px 0;
}
.side-tools {
    width: 98px;
    padding-bottom: 1px;
    border-left: 1px solid #dcdce1;
}
.grip {
    width: 6px;
    height: 22px;
    margin: 0 4px 0 3px;
    background: radial-gradient(circle at 1px 1px, #c9cace 1px, transparent 1px) 0 0 / 4px 4px;
}
.tool {
    flex: none;
    display: flex;
    align-items: center;
    justify-content: center;
    width: 40px;
    height: 39px;
    border: 1px solid transparent;
    border-radius: 5px;
}
.tool svg {
    flex: none;
    width: 36px;
    height: 36px;
}
.tool.selected {
    background: #dcecfa;
    border-color: #3a86b8;
}
.drop {
    flex: none;
    width: 15px;
    height: 39px;
    border-radius: 3px;
}
.drop::before {
    content: "";
    display: block;
    width: 0;
    margin: 0 auto;
    border: 4px solid transparent;
    border-top: 5px solid #8b8c90;
    border-bottom: 0;
}
.drop.boxed {
    background: #e4e4e6;
    border: 1px solid #a9aaae;
}
.sep {
    flex: 1;
    display: flex;
    justify-content: center;
}
.sep::before {
    content: "";
    width: 2px;
    height: 25px;
    background: #a0a0a5;
}

/* viewport */
.workspace {
    flex: 1;
    min-height: 0;
    display: flex;
    gap: 7px;
}
.viewport {
    position: relative;
    flex: 1;
    overflow: hidden;
    background: #bebfc5;
}
.scene {
    width: 100%;
    height: 100%;
}
.floatbar {
    position: absolute;
    left: 72px;
    top: 15px;
    width: 931px;
    padding: 3px 2px 3px 1px;
    background: #f3f3f7;
    border: 1px solid #e6eaf0;
}
.floatbar-title {
    display: flex;
    align-items: center;
    justify-content: space-between;
    height: 25px;
    margin-right: 1px;
    padding: 3px 4px 0 6px;
    background: #9db3cf;
}
.floatbar-title h2 {
    font-size: 15px;
    color: #3a4a60;
}
.floatbar-title svg {
    width: 12px;
    height: 12px;
    margin-bottom: 5px;
    color: #1f4468;
}
.floatbar-tools {
    display: flex;
    align-items: center;
    height: 43px;
    padding: 2px 0 0 1px;
}

/* tray */
.tray {
    width: 490px;
    display: flex;
    flex-direction: column;
    border: 1px solid #c4c5ca;
    border-left: 1px solid #a5a6ab;
    border-bottom: 2px solid #a9aaae;
    border-right: 0;
}
.tray-title {
    display: flex;
    align-items: center;
    gap: 8px;
    height: 38px;
    padding: 0 2px 0 6px;
    border-bottom: 2px solid #a9aaae;
}
.tray-title h2 {
    flex: 1;
    font-size: 15px;
}
.tray-title button {
    width: 14px;
    height: 14px;
    border: 1px solid #77787d;
    border-radius: 2px;
}
.tray-scroll {
    flex: 1;
    min-height: 0;
    display: flex;
    background: #f3f6fd;
}
.tray-panels {
    flex: 1;
    min-width: 0;
    display: flex;
    flex-direction: column;
    gap: 2px;
    padding: 1px 1px 4px;
    background: #f6f8fd;
}
.panel-head {
    flex: none;
    display: flex;
    align-items: center;
    height: 32px;
    padding-right: 2px;
    background: #e1e2e8;
}
.toggle {
    flex: 1;
    display: flex;
    align-items: center;
    gap: 8px;
    height: 32px;
    padding: 0 0 0 7px;
    text-align: left;
}
.toggle svg {
    width: 16px;
    height: 16px;
    color: #77787d;
}
.close {
    display: flex;
    align-items: center;
    justify-content: center;
    width: 26px;
    height: 26px;
    background: #fbfbfd;
    border: 1px solid #a9aaae;
    border-radius: 3px;
}
.close svg {
    width: 11px;
    height: 11px;
    color: #66676c;
}
.outliner {
    height: 308px;
    padding-top: 11px;
    border-bottom: 1px solid #d9dae0;
}
.filter {
    display: flex;
    align-items: center;
    padding: 0 15px 0 3px;
}
.filter input {
    flex: 1;
    height: 31px;
    margin: 0 24px 0 7px;
    padding: 0 3px;
}
.export svg {
    width: 18px;
    height: 20px;
}
.tree {
    height: 237px;
    margin: 12px 0 0 2px;
    background: #fff;
    border: 1px solid #a9aaae;
    list-style: none;
}
.tree li {
    display: flex;
    align-items: center;
    height: 21px;
    padding-left: 4px;
}
.tree .root {
    padding-left: 27px;
    font-weight: 700;
}
.tree .active {
    color: #1b6f9e;
}
.home {
    width: 14px;
    height: 14px;
    margin-right: 8px;
}
.eye {
    width: 17px;
    height: 13px;
}
.kind {
    width: 14px;
    height: 14px;
    margin: 0 8px 0 29px;
}
.tags {
    flex: 1;
    display: flex;
    flex-direction: column;
    padding: 1px 0 5px 2px;
    border-bottom: 1px solid #d9dae0;
    color: #2c2d32;
}
.tags-tools {
    display: flex;
    align-items: center;
    height: 37px;
    padding: 0 16px 0 12px;
    gap: 26px;
}
.tags-tools svg {
    width: 24px;
    height: 24px;
    fill: none;
    stroke: #333;
}
.tags-tools input {
    flex: 1;
    height: 31px;
    margin: 0 -12px;
    padding: 0 3px;
}
.tags-tools .export {
    margin-left: 4px;
}
.tags-tools .export svg {
    width: 18px;
    height: 20px;
    fill: #000;
    stroke: none;
}
.tags-list {
    flex: 1;
    margin-bottom: 13px;
    padding-top: 3px;
    overflow: hidden;
    background: #fff;
}
.tags table {
    width: 466px;
    table-layout: fixed;
    border-collapse: collapse;
}
.tags th {
    height: 26px;
    padding: 0 0 0 4px;
    border-right: 1px solid #d5d6da;
    border-bottom: 1px solid #d5d6da;
    font-weight: 400;
    text-align: left;
}
.tags td {
    height: 21px;
    padding: 0 0 0 4px;
    white-space: nowrap;
}
.tags td .eye {
    margin-left: 6px;
}
.tags .name {
    padding-left: 26px;
}
.name div {
    display: flex;
    align-items: center;
    justify-content: space-between;
    padding-right: 6px;
}
.name svg {
    width: 10px;
    height: 6px;
}
.c-eye {
    width: 36px;
}
.c-color {
    width: 37px;
}
.c-dash {
    width: 75px;
}
.c-pen {
    width: 38px;
}
.tags .pen {
    position: relative;
    padding-left: 10px;
}
.pen svg {
    width: 18px;
    height: 16px;
}
.scrollbar {
    width: 17px;
    display: flex;
    flex-direction: column;
    background: #fdfdfe;
    border: 1px solid #b5b6bb;
    border-top: 0;
}
.scrollbar button {
    height: 17px;
    background: #fff;
}
.scrollbar button::before {
    content: "";
    display: block;
    width: 0;
    margin: 0 auto;
    border: 4px solid transparent;
}
.scrollbar .up {
    border-bottom: 2px solid #dcdce1;
}
.scrollbar .up::before {
    border-bottom: 5px solid #8b8c90;
    border-top: 0;
}
.scrollbar .down::before {
    border-top: 5px solid #77787d;
    border-bottom: 0;
}
.thumb {
    height: 31px;
    margin-top: auto;
    background: #f0f1f4;
    border-top: 1px solid #c4c5ca;
    border-bottom: 1px solid #c4c5ca;
}

/* status bar */
.statusbar {
    display: flex;
    align-items: center;
    height: 40px;
    padding-left: 10px;
    border-bottom: 1px solid #a9aaa5;
}
.statusbar button {
    margin-right: 15px;
}
.statusbar svg {
    width: 20px;
    height: 20px;
}
.statusbar p {
    flex: 1;
    margin-right: 21px;
    padding: 4px 0 6px 6px;
    border-left: 2px solid #dfdfe4;
    border-right: 2px solid #dfdfe4;
    font-size: 16px;
}
.measure {
    width: 250px;
    height: 34px;
    background: #f1f1f5;
}
.resize {
    align-self: flex-end;
    width: 12px;
    height: 12px;
    margin-left: 15px;
    background: radial-gradient(circle at 1px 1px, #b5b6bb 1px, transparent 1px) 0 0 / 4px 4px;
    clip-path: polygon(100% 0, 100% 100%, 0 100%);
}
.desktop {
    display: flex;
    gap: 64px;
    height: 6px;
    padding: 4px 0 0 1349px;
    background: linear-gradient(90deg, #ddf0b0, #e2ef9c 23%, #eadfae 27%, #e9e0b0 65%, #f2e3c6 78%, #d4dff0 88%);
}
.desktop span {
    width: 46px;
    background: #eba79a;
    border-radius: 3px 3px 0 0;
}
.desktop span + span {
    background: #fbf1df;
}
```
